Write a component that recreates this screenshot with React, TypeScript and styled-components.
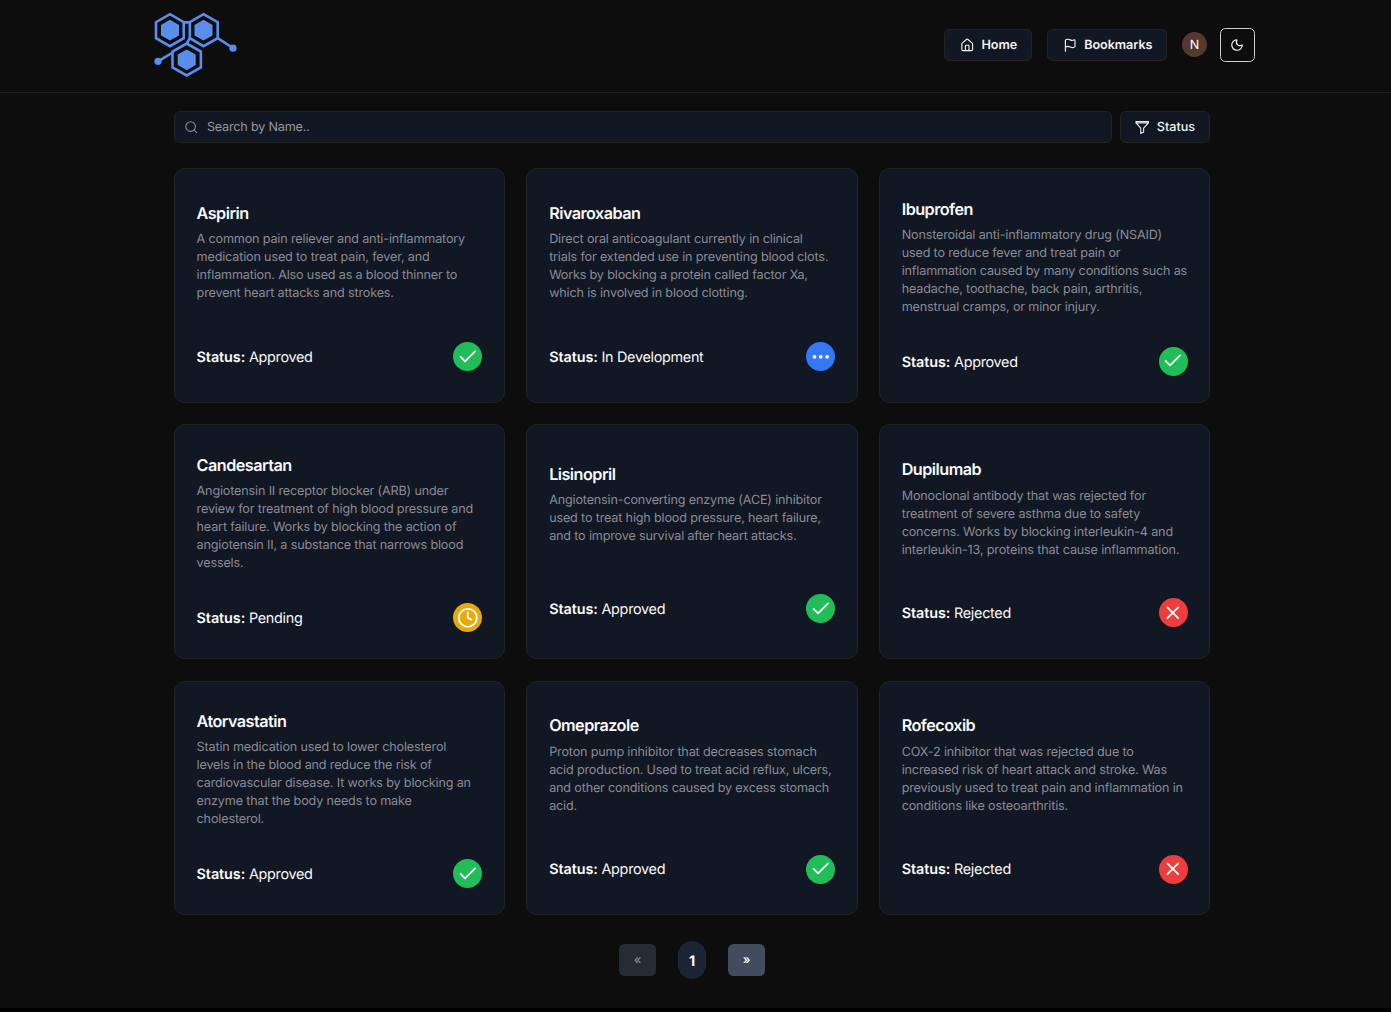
import React from "react";
import styled, { createGlobalStyle } from "styled-components";
import { House, Flag, Moon, Search, Check, X, Clock, Ellipsis } from "lucide-react";

const GlobalStyle = createGlobalStyle`
  * { box-sizing: border-box; }
  html { background: #000; }
  body {
    margin: 0;
    background: #000;
    color: #fafafa;
    font-family: Inter, "Liberation Sans", sans-serif;
    font-size: 14.4px;
    line-height: 21.6px;
    text-rendering: geometricPrecision;
  }
  button, input { font: inherit; color: inherit; text-rendering: inherit; }
`;

const surface = "#111723";
const line = "#232325";
const muted = "#8b8c95";

const Page = styled.div`
  height: 1008px;
  background: #0d0d0d;
`;

const Header = styled.header`
  display: flex;
  align-items: center;
  justify-content: space-between;
  height: 93px;
  padding: 0 136px 2px 152px;
  border-bottom: 1px solid ${line};
`;

const Nav = styled.nav`
  display: flex;
  align-items: center;
`;

const Button = styled.button<{ $width: number }>`
  display: inline-flex;
  align-items: center;
  justify-content: center;
  gap: 7.2px;
  width: ${(p) => p.$width}px;
  height: 32px;
  padding: 0;
  border: 1px solid ${line};
  border-radius: 5.4px;
  background: ${surface};
  color: #f4f4f5;
  font-size: 12.6px;
  font-weight: 500;
  line-height: 18px;
`;

const ButtonText = styled.span`
  padding-top: 1.4px;
`;

const NavButton = styled(Button)`
  margin-right: 15px;
  padding-left: 1px;
  font-weight: 600;
  letter-spacing: -0.05px;
`;

const Avatar = styled.span`
  display: flex;
  align-items: center;
  justify-content: center;
  width: 25px;
  height: 25px;
  margin: 0 13px 1px 0;
  padding-top: 2.6px;
  border-radius: 50%;
  background: #54392f;
  color: #fff;
  font-size: 12.6px;
`;

const ThemeToggle = styled.button`
  display: flex;
  align-items: center;
  justify-content: center;
  width: 35px;
  height: 34px;
  padding: 0 1px 0 0;
  border: 1px solid #cfcfcf;
  border-radius: 5.4px;
  background: transparent;
`;

const Main = styled.main`
  width: 1036.25px;
  margin-left: 173.9px;
  padding-top: 18px;
`;

const Toolbar = styled.div`
  display: flex;
  gap: 8px;
  margin-bottom: 25.2px;
`;

const SearchBox = styled.label`
  display: flex;
  flex: 1;
  align-items: center;
  gap: 8.6px;
  height: 32px;
  padding-left: 9px;
  border: 1px solid ${line};
  border-radius: 5.4px;
  background: ${surface};
  color: ${muted};
`;

const SearchInput = styled.input`
  flex: 1;
  padding: 1.4px 0 0;
  border: 0;
  outline: 0;
  background: transparent;
  font-size: 12.6px;
  line-height: 18px;
  letter-spacing: -0.18px;
  &::placeholder { color: #96979f; opacity: 1; }
`;

const Grid = styled.div`
  display: grid;
  grid-template-columns: repeat(3, 1fr);
  grid-auto-rows: 234.4px;
  gap: 21.8px 21.4px;
`;

const Card = styled.article`
  display: flex;
  flex-direction: column;
  justify-content: space-around;
  border: 1px solid ${line};
  border-radius: 10.8px;
  background: ${surface};
`;

const CardHead = styled.div`
  display: flex;
  flex-direction: column;
  gap: 5.2px;
  padding: 22.9px 0 20.9px 21.7px;
`;

const Title = styled.h3`
  margin: 0;
  font-size: 16.2px;
  font-weight: 600;
  line-height: 25.2px;
  letter-spacing: -0.032em;
`;

const Description = styled.p`
  margin: 0 21.6px 0 0;
  color: ${muted};
  font-size: 12.6px;
  line-height: 18px;
  letter-spacing: -0.155px;
  white-space: pre-line;
`;

const CardFoot = styled.div`
  display: flex;
  align-items: center;
  justify-content: space-between;
  padding: 0 21.6px 21.4px 21.7px;
`;

const StatusText = styled.p`
  margin: 0;
  padding-top: 2.2px;
  letter-spacing: -0.3px;
`;

const Label = styled.span`
  font-weight: 600;
  letter-spacing: -0.08px;
`;

const Badge = styled.span<{ $color: string }>`
  display: flex;
  align-items: center;
  justify-content: center;
  width: 29px;
  height: 29px;
  border-radius: 50%;
  background: ${(p) => p.$color};
  color: #fff;
`;

const Pager = styled.div`
  display: flex;
  align-items: center;
  justify-content: center;
  gap: 22px;
  margin-top: 26px;
`;

const PageButton = styled.button<{ $dim?: boolean }>`
  width: 37px;
  height: 32px;
  padding: 2px 0 0;
  border: 0;
  border-radius: 5.4px;
  background: ${(p) => (p.$dim ? "#262c35" : "#414c5e")};
  color: ${(p) => (p.$dim ? "#85888d" : "#fff")};
  font-size: 12.6px;
  font-weight: 500;
`;

const PageNumber = styled.span`
  display: flex;
  align-items: center;
  justify-content: center;
  width: 28px;
  height: 38px;
  padding-top: 3px;
  border-radius: 14px;
  background: #1c2534;
  font-weight: 700;
`;

type Status = "Approved" | "In Development" | "Pending" | "Rejected";

const badges: Record<Status, { color: string; icon: React.ReactNode }> = {
  Approved: { color: "#21bd58", icon: <Check size={21.6} strokeWidth={2} /> },
  "In Development": { color: "#3478f6", icon: <Ellipsis size={21.6} strokeWidth={2.2} /> },
  Pending: { color: "#e8a90c", icon: <Clock size={21.6} strokeWidth={2} /> },
  Rejected: { color: "#ee3d3d", icon: <X size={21.6} strokeWidth={2} /> },
};

const drugs: { name: string; text: string; status: Status }[] = [
  { name: "Aspirin", status: "Approved", text: "A common pain reliever and anti-inflammatory medication used to treat pain, fever, and inflammation. Also used as a blood thinner to prevent heart attacks and strokes." },
  { name: "Rivaroxaban", status: "In Development", text: "Direct oral anticoagulant currently in clinical\ntrials for extended use in preventing blood clots. Works by blocking a protein called factor Xa, which is involved in blood clotting." },
  { name: "Ibuprofen", status: "Approved", text: "Nonsteroidal anti-inflammatory drug (NSAID) used to reduce fever and treat pain or inflammation caused by many conditions such as headache, toothache, back pain, arthritis, menstrual cramps, or minor injury." },
  { name: "Candesartan", status: "Pending", text: "Angiotensin II receptor blocker (ARB) under review for treatment of high blood pressure and heart failure. Works by blocking the action of angiotensin II, a substance that narrows blood vessels." },
  { name: "Lisinopril", status: "Approved", text: "Angiotensin-converting enzyme (ACE) inhibitor used to treat high blood pressure, heart failure, and to improve survival after heart attacks." },
  { name: "Dupilumab", status: "Rejected", text: "Monoclonal antibody that was rejected for treatment of severe asthma due to safety concerns. Works by blocking interleukin-4 and interleukin-13, proteins that cause inflammation." },
  { name: "Atorvastatin", status: "Approved", text: "Statin medication used to lower cholesterol levels in the blood and reduce the risk of cardiovascular disease. It works by blocking an enzyme that the body needs to make\ncholesterol." },
  { name: "Omeprazole", status: "Approved", text: "Proton pump inhibitor that decreases stomach acid production. Used to treat acid reflux, ulcers, and other conditions caused by excess stomach acid." },
  { name: "Rofecoxib", status: "Rejected", text: "COX-2 inhibitor that was rejected due to increased risk of heart attack and stroke. Was previously used to treat pain and inflammation in conditions like osteoarthritis." },
];

const Logo = () => (
  <svg width="86" height="66" viewBox="152 12 86 66" fill="none" stroke="#5b8def" strokeWidth="2.6">
    <path d="M170 14.2 183.7 22.2V38.2L170 46.2 156 38.2V22.2Z" />
    <path d="M203.5 14.2 217.7 22.2V38.2L203.5 46.2 189.8 38.2V22.2Z" />
    <path d="M186.7 43.5 200.9 51.5V67.5L186.7 75.5 172.5 67.5V51.5Z" />
    <path d="M183.7 22.4H189.8M189.8 38.2 186.7 43.5M217.7 38.2 233 48M172.7 52.5 158 61.3" />
    <g fill="#5b8def" stroke="none">
      <path d="M170 19.8 179 25V35.4L170 40.6 161 35.4V25Z" />
      <path d="M203.5 19.8 212.5 25V35.4L203.5 40.6 194.5 35.4V25Z" />
      <path d="M186.7 49.4 195.7 54.6V65L186.7 70.2 177.7 65V54.6Z" />
      <circle cx="233" cy="48.2" r="3.6" />
      <circle cx="158" cy="61.3" r="3.6" />
    </g>
  </svg>
);

const FunnelIcon = () => (
  <svg width="14.4" height="14.4" viewBox="0 0 15 15" fill="none" stroke="currentColor" strokeWidth="1.1" strokeLinejoin="round">
    <path d="M1 1.5H14V3L9 8.5V12.5L6 14V8.5L1 3ZM1 3H14" />
  </svg>
);

export default function App() {
  return (
    <>
      <GlobalStyle />
      <Page>
        <Header>
          <Logo />
          <Nav>
            <NavButton $width={88}>
              <House size={14.4} strokeWidth={1.9} />
              <ButtonText>Home</ButtonText>
            </NavButton>
            <NavButton $width={120}>
              <Flag size={14.4} strokeWidth={1.9} />
              <ButtonText>Bookmarks</ButtonText>
            </NavButton>
            <Avatar>N</Avatar>
            <ThemeToggle><Moon size={14} strokeWidth={2} /></ThemeToggle>
          </Nav>
        </Header>
        <Main>
          <Toolbar>
            <SearchBox>
              <Search size={14.4} strokeWidth={1.8} />
              <SearchInput placeholder="Search by Name.." />
            </SearchBox>
            <Button $width={90}>
              <FunnelIcon />
              <ButtonText>Status</ButtonText>
            </Button>
          </Toolbar>
          <Grid>
            {drugs.map((d) => (
              <Card key={d.name}>
                <CardHead>
                  <Title>{d.name}</Title>
                  <Description>{d.text}</Description>
                </CardHead>
                <CardFoot>
                  <StatusText><Label>Status:</Label> {d.status}</StatusText>
                  <Badge $color={badges[d.status].color}>{badges[d.status].icon}</Badge>
                </CardFoot>
              </Card>
            ))}
          </Grid>
          <Pager>
            <PageButton $dim>«</PageButton>
            <PageNumber>1</PageNumber>
            <PageButton>»</PageButton>
          </Pager>
        </Main>
      </Page>
    </>
  );
}
